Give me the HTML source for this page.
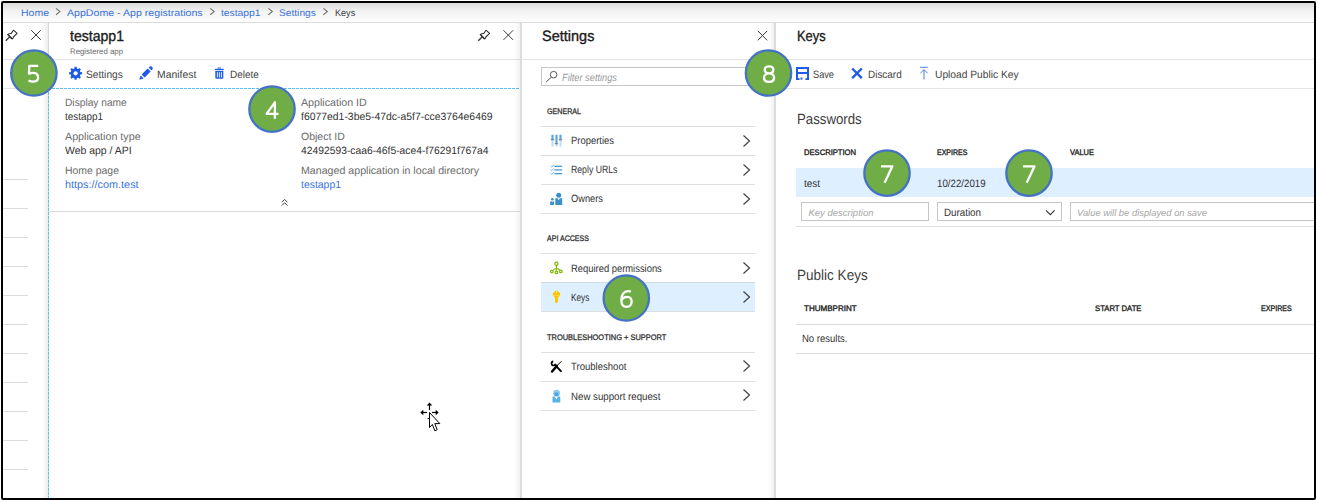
<!DOCTYPE html>
<html><head><meta charset="utf-8"><style>
html,body{margin:0;padding:0;width:1317px;height:501px;overflow:hidden;background:#fff}
body{position:relative;font-family:'Liberation Sans', sans-serif}
.t{position:absolute;white-space:nowrap;line-height:1;transform-origin:0 0;text-rendering:geometricPrecision}
.b{position:absolute}
.frame{position:absolute;left:1px;top:1px;width:1315px;height:499px;box-sizing:border-box;border:2px solid #000;border-radius:2px;pointer-events:none}
.ov{position:absolute;left:0;top:0}
</style></head><body>
<div class="b" style="left:3px;top:3px;width:1311px;height:19px;background:linear-gradient(#dadada,#f3f3f3 45%,#fdfdfd)"></div>
<div class="b" style="left:3px;top:22px;width:1311px;height:1px;background:#dcdcdc"></div>
<div class="b" style="left:42px;top:23px;width:6px;height:475px;background:linear-gradient(90deg,rgba(0,0,0,0),rgba(0,0,0,0.07))"></div>
<div class="b" style="left:48px;top:23px;width:1px;height:475px;background:#d6d6d6"></div>
<div class="b" style="left:3px;top:59px;width:45px;height:1px;background:#e3e3e3"></div>
<div class="b" style="left:3px;top:88px;width:45px;height:1px;background:#e3e3e3"></div>
<div class="b" style="left:3px;top:179px;width:25px;height:1px;background:#dcdcdc"></div>
<div class="b" style="left:3px;top:208px;width:25px;height:1px;background:#dcdcdc"></div>
<div class="b" style="left:3px;top:237px;width:25px;height:1px;background:#dcdcdc"></div>
<div class="b" style="left:3px;top:266px;width:25px;height:1px;background:#dcdcdc"></div>
<div class="b" style="left:3px;top:295px;width:25px;height:1px;background:#dcdcdc"></div>
<div class="b" style="left:3px;top:324px;width:25px;height:1px;background:#dcdcdc"></div>
<div class="b" style="left:3px;top:353px;width:25px;height:1px;background:#dcdcdc"></div>
<div class="b" style="left:3px;top:382px;width:25px;height:1px;background:#dcdcdc"></div>
<div class="b" style="left:3px;top:411px;width:25px;height:1px;background:#dcdcdc"></div>
<div class="b" style="left:3px;top:440px;width:25px;height:1px;background:#dcdcdc"></div>
<div class="b" style="left:3px;top:469px;width:25px;height:1px;background:#dcdcdc"></div>
<div class="b" style="left:49px;top:59px;width:471px;height:1px;background:#e3e3e3"></div>
<div class="b" style="left:48px;top:88px;width:472px;height:1px;background:repeating-linear-gradient(90deg,#5ec2f0 0 3px,transparent 3px 4px)"></div>
<div class="b" style="left:48px;top:88px;width:1px;height:410px;background:repeating-linear-gradient(180deg,#5ec2f0 0 3px,transparent 3px 4px)"></div>
<div class="b" style="left:49px;top:211px;width:471px;height:1px;background:#dcdcdc"></div>
<div class="b" style="left:514px;top:23px;width:6px;height:475px;background:linear-gradient(90deg,rgba(0,0,0,0),rgba(0,0,0,0.05))"></div>
<div class="b" style="left:520px;top:23px;width:2px;height:475px;background:#dcdcdc"></div>
<div class="b" style="left:768px;top:23px;width:6px;height:475px;background:linear-gradient(90deg,rgba(0,0,0,0),rgba(0,0,0,0.05))"></div>
<div class="b" style="left:774px;top:23px;width:2px;height:475px;background:#dcdcdc"></div>
<div class="b" style="left:521px;top:59px;width:253px;height:1px;background:#e3e3e3"></div>
<div class="b" style="left:541px;top:67px;width:214px;height:19px;border:1px solid #c6c6c6;box-sizing:border-box;background:#fff"></div>
<div class="b" style="left:541px;top:126px;width:214px;height:1px;background:#dedede"></div>
<div class="b" style="left:541px;top:155px;width:214px;height:1px;background:#dedede"></div>
<div class="b" style="left:541px;top:184px;width:214px;height:1px;background:#dedede"></div>
<div class="b" style="left:541px;top:213px;width:214px;height:1px;background:#dedede"></div>
<div class="b" style="left:541px;top:253px;width:214px;height:1px;background:#dedede"></div>
<div class="b" style="left:541px;top:311px;width:214px;height:1px;background:#dedede"></div>
<div class="b" style="left:541px;top:352px;width:214px;height:1px;background:#dedede"></div>
<div class="b" style="left:541px;top:381px;width:214px;height:1px;background:#dedede"></div>
<div class="b" style="left:541px;top:410px;width:214px;height:1px;background:#dedede"></div>
<div class="b" style="left:541px;top:283px;width:214px;height:28px;background:#deefff"></div>
<div class="b" style="left:541px;top:282px;width:214px;height:1px;background:#cfdde9"></div>
<div class="b" style="left:775px;top:59px;width:539px;height:1px;background:#e3e3e3"></div>
<div class="b" style="left:775px;top:88px;width:539px;height:1px;background:#e3e3e3"></div>
<div class="b" style="left:796px;top:168px;width:518px;height:29px;background:#deefff"></div>
<div class="b" style="left:801px;top:202px;width:128px;height:19px;border:1px solid #c6c6c6;box-sizing:border-box"></div>
<div class="b" style="left:937px;top:202px;width:125px;height:19px;border:1px solid #c6c6c6;box-sizing:border-box"></div>
<div class="b" style="left:1070px;top:202px;width:244px;height:19px;border:1px solid #c6c6c6;box-sizing:border-box;border-right:none"></div>
<div class="b" style="left:796px;top:226px;width:518px;height:1px;background:#dedede"></div>
<div class="b" style="left:796px;top:324px;width:518px;height:1px;background:#dedede"></div>
<div class="b" style="left:796px;top:353px;width:518px;height:1px;background:#dedede"></div>
<div class="t" style="left:20.5px;top:9px;font-size:9.6px;font-weight:400;font-style:normal;color:#3a73d9;transform:scaleX(1.0940);">Home</div>
<div class="t" style="left:67.0px;top:9px;font-size:9.6px;font-weight:400;font-style:normal;color:#3a73d9;transform:scaleX(1.1055);">AppDome - App registrations</div>
<div class="t" style="left:221.3px;top:9px;font-size:9.6px;font-weight:400;font-style:normal;color:#3a73d9;transform:scaleX(1.0730);">testapp1</div>
<div class="t" style="left:279.3px;top:9px;font-size:9.6px;font-weight:400;font-style:normal;color:#3a73d9;transform:scaleX(1.0614);">Settings</div>
<div class="t" style="left:334.8px;top:9px;font-size:9.6px;font-weight:400;font-style:normal;color:#404040;transform:scaleX(0.9464);">Keys</div>
<div class="t" style="left:69.5px;top:29px;font-size:15px;font-weight:400;font-style:normal;color:#1a1a1a;transform:scaleX(0.9384);-webkit-text-stroke:0.35px #1a1a1a">testapp1</div>
<div class="t" style="left:69.7px;top:48px;font-size:8px;font-weight:400;font-style:normal;color:#666;transform:scaleX(0.9767);">Registered app</div>
<div class="t" style="left:86.4px;top:70px;font-size:10.6px;font-weight:400;font-style:normal;color:#444444;transform:scaleX(0.9613);">Settings</div>
<div class="t" style="left:156.9px;top:70px;font-size:10.6px;font-weight:400;font-style:normal;color:#444444;transform:scaleX(0.9813);">Manifest</div>
<div class="t" style="left:230.0px;top:70px;font-size:10.6px;font-weight:400;font-style:normal;color:#444444;transform:scaleX(0.9404);">Delete</div>
<div class="t" style="left:65.4px;top:98px;font-size:10.6px;font-weight:400;font-style:normal;color:#6b6b6b;transform:scaleX(0.9628);">Display name</div>
<div class="t" style="left:65.4px;top:112px;font-size:10.6px;font-weight:400;font-style:normal;color:#333333;transform:scaleX(0.9347);">testapp1</div>
<div class="t" style="left:65.4px;top:132px;font-size:10.6px;font-weight:400;font-style:normal;color:#6b6b6b;transform:scaleX(1.0107);">Application type</div>
<div class="t" style="left:65.4px;top:146px;font-size:10.6px;font-weight:400;font-style:normal;color:#333333;transform:scaleX(0.9862);">Web app / API</div>
<div class="t" style="left:65.4px;top:166px;font-size:10.6px;font-weight:400;font-style:normal;color:#6b6b6b;transform:scaleX(0.9857);">Home page</div>
<div class="t" style="left:65.4px;top:180px;font-size:10.6px;font-weight:400;font-style:normal;color:#3a73d9;transform:scaleX(1.0244);">https://com.test</div>
<div class="t" style="left:300.8px;top:98px;font-size:10.6px;font-weight:400;font-style:normal;color:#6b6b6b;transform:scaleX(1.0065);">Application ID</div>
<div class="t" style="left:300.8px;top:112px;font-size:10.6px;font-weight:400;font-style:normal;color:#333333;transform:scaleX(0.9822);">f6077ed1-3be5-47dc-a5f7-cce3764e6469</div>
<div class="t" style="left:300.8px;top:132px;font-size:10.6px;font-weight:400;font-style:normal;color:#6b6b6b;transform:scaleX(0.9919);">Object ID</div>
<div class="t" style="left:300.8px;top:146px;font-size:10.6px;font-weight:400;font-style:normal;color:#333333;transform:scaleX(0.9734);">42492593-caa6-46f5-ace4-f76291f767a4</div>
<div class="t" style="left:300.8px;top:166px;font-size:10.6px;font-weight:400;font-style:normal;color:#6b6b6b;transform:scaleX(1.0041);">Managed application in local directory</div>
<div class="t" style="left:300.8px;top:180px;font-size:10.6px;font-weight:400;font-style:normal;color:#3a73d9;transform:scaleX(0.9839);">testapp1</div>
<div class="t" style="left:542.0px;top:29px;font-size:15px;font-weight:400;font-style:normal;color:#1a1a1a;transform:scaleX(0.9667);-webkit-text-stroke:0.35px #1a1a1a">Settings</div>
<div class="t" style="left:562.0px;top:74px;font-size:10.4px;font-weight:400;font-style:italic;color:#9a9a9a;transform:scaleX(0.8900);">Filter settings</div>
<div class="t" style="left:547.4px;top:108px;font-size:8px;font-weight:400;font-style:normal;color:#333;transform:scaleX(0.8893);-webkit-text-stroke:0.3px #333">GENERAL</div>
<div class="t" style="left:571.0px;top:136px;font-size:10.6px;font-weight:400;font-style:normal;color:#333333;transform:scaleX(0.8903);">Properties</div>
<div class="t" style="left:571.0px;top:165px;font-size:10.6px;font-weight:400;font-style:normal;color:#333333;transform:scaleX(0.8208);">Reply URLs</div>
<div class="t" style="left:571.0px;top:194px;font-size:10.6px;font-weight:400;font-style:normal;color:#333333;transform:scaleX(0.8767);">Owners</div>
<div class="t" style="left:547.4px;top:235px;font-size:8px;font-weight:400;font-style:normal;color:#333;transform:scaleX(0.8828);-webkit-text-stroke:0.3px #333">API ACCESS</div>
<div class="t" style="left:571.0px;top:264px;font-size:10.6px;font-weight:400;font-style:normal;color:#333333;transform:scaleX(0.8863);">Required permissions</div>
<div class="t" style="left:571.0px;top:293px;font-size:10.6px;font-weight:400;font-style:normal;color:#333333;transform:scaleX(0.7809);">Keys</div>
<div class="t" style="left:547.4px;top:334px;font-size:8px;font-weight:400;font-style:normal;color:#333;transform:scaleX(0.9320);-webkit-text-stroke:0.3px #333">TROUBLESHOOTING + SUPPORT</div>
<div class="t" style="left:571.0px;top:362px;font-size:10.6px;font-weight:400;font-style:normal;color:#333333;transform:scaleX(0.9015);">Troubleshoot</div>
<div class="t" style="left:571.0px;top:392px;font-size:10.6px;font-weight:400;font-style:normal;color:#333333;transform:scaleX(0.9146);">New support request</div>
<div class="t" style="left:796.8px;top:29px;font-size:15px;font-weight:400;font-style:normal;color:#1a1a1a;transform:scaleX(0.8618);-webkit-text-stroke:0.35px #1a1a1a">Keys</div>
<div class="t" style="left:812.9px;top:70px;font-size:10.6px;font-weight:400;font-style:normal;color:#444444;transform:scaleX(0.8693);">Save</div>
<div class="t" style="left:867.6px;top:70px;font-size:10.6px;font-weight:400;font-style:normal;color:#444444;transform:scaleX(0.9381);">Discard</div>
<div class="t" style="left:934.8px;top:70px;font-size:10.6px;font-weight:400;font-style:normal;color:#444444;transform:scaleX(0.9656);">Upload Public Key</div>
<div class="t" style="left:796.5px;top:113px;font-size:14.8px;font-weight:400;font-style:normal;color:#3d3d3d;transform:scaleX(0.8940);">Passwords</div>
<div class="t" style="left:803.8px;top:149px;font-size:8px;font-weight:400;font-style:normal;color:#222;transform:scaleX(0.9511);-webkit-text-stroke:0.35px #222">DESCRIPTION</div>
<div class="t" style="left:937.4px;top:149px;font-size:8px;font-weight:400;font-style:normal;color:#222;transform:scaleX(0.8764);-webkit-text-stroke:0.35px #222">EXPIRES</div>
<div class="t" style="left:1070.3px;top:149px;font-size:8px;font-weight:400;font-style:normal;color:#222;transform:scaleX(0.9360);-webkit-text-stroke:0.35px #222">VALUE</div>
<div class="t" style="left:803.8px;top:179px;font-size:10.6px;font-weight:400;font-style:normal;color:#333333;transform:scaleX(0.9369);">test</div>
<div class="t" style="left:937.4px;top:179px;font-size:10.6px;font-weight:400;font-style:normal;color:#333333;transform:scaleX(0.9164);">10/22/2019</div>
<div class="t" style="left:808.5px;top:209px;font-size:9.5px;font-weight:400;font-style:italic;color:#a6a6a6;">Key description</div>
<div class="t" style="left:944.0px;top:208px;font-size:10.6px;font-weight:400;font-style:normal;color:#333333;transform:scaleX(0.9239);">Duration</div>
<div class="t" style="left:1077.0px;top:209px;font-size:9.5px;font-weight:400;font-style:italic;color:#a6a6a6;transform:scaleX(0.9872);">Value will be displayed on save</div>
<div class="t" style="left:796.5px;top:269px;font-size:14.8px;font-weight:400;font-style:normal;color:#3d3d3d;transform:scaleX(0.9145);">Public Keys</div>
<div class="t" style="left:804.1px;top:305px;font-size:8px;font-weight:400;font-style:normal;color:#222;transform:scaleX(1.0047);-webkit-text-stroke:0.35px #222">THUMBPRINT</div>
<div class="t" style="left:1095.2px;top:305px;font-size:8px;font-weight:400;font-style:normal;color:#222;transform:scaleX(0.9625);-webkit-text-stroke:0.35px #222">START DATE</div>
<div class="t" style="left:1261.0px;top:305px;font-size:8px;font-weight:400;font-style:normal;color:#222;transform:scaleX(0.8850);-webkit-text-stroke:0.35px #222">EXPIRES</div>
<div class="t" style="left:801.5px;top:334px;font-size:10.6px;font-weight:400;font-style:normal;color:#333333;transform:scaleX(0.8985);">No results.</div>
<svg class="ov" width="1317" height="501" viewBox="0 0 1317 501"><g transform="translate(0,0)" fill="none" stroke="#333" stroke-linejoin="round"><path d="M5.8 40.7 L9.9 36.7" stroke-width="1.2"/><path d="M7.7 34.4 Q9.6 33.4 11.1 33.6 L13.5 30.2 L17.1 33.4 L13.3 37 Q13.4 38.2 12.1 39 Z" stroke-width="1.05"/><path d="M7.9 34.6 L11.9 38.8" stroke-width="1.5"/></g>
<path d="M31.2 30.2 L40.8 39.8 M40.8 30.2 L31.2 39.8" stroke="#3a3a3a" stroke-width="1" fill="none"/>
<g transform="translate(472.5,0)" fill="none" stroke="#333" stroke-linejoin="round"><path d="M5.8 40.7 L9.9 36.7" stroke-width="1.2"/><path d="M7.7 34.4 Q9.6 33.4 11.1 33.6 L13.5 30.2 L17.1 33.4 L13.3 37 Q13.4 38.2 12.1 39 Z" stroke-width="1.05"/><path d="M7.9 34.6 L11.9 38.8" stroke-width="1.5"/></g>
<path d="M503.5 30.3 L513.1 39.9 M513.1 30.3 L503.5 39.9" stroke="#3a3a3a" stroke-width="1" fill="none"/>
<path d="M757.8 30.900000000000002 L767.2 40.300000000000004 M767.2 30.900000000000002 L757.8 40.300000000000004" stroke="#3a3a3a" stroke-width="1" fill="none"/>
<polygon points="74.30,68.78 74.57,66.78 76.63,66.78 76.90,68.78 77.88,69.19 79.48,67.96 80.94,69.42 79.71,71.02 80.12,72.00 82.12,72.27 82.12,74.33 80.12,74.60 79.71,75.58 80.94,77.18 79.48,78.64 77.88,77.41 76.90,77.82 76.63,79.82 74.57,79.82 74.30,77.82 73.32,77.41 71.72,78.64 70.26,77.18 71.49,75.58 71.08,74.60 69.08,74.33 69.08,72.27 71.08,72.00 71.49,71.02 70.26,69.42 71.72,67.96 73.32,69.19" fill="#1e5be6"/>
<circle cx="75.6" cy="73.3" r="4.9" fill="#1e5be6"/>
<circle cx="75.6" cy="73.3" r="2.1" fill="#fff"/>
<g fill="#1e5be6"><path d="M139.3 79.8 L140.6 75.4 L143.6 78.4 Z"/><path d="M141.6 74.4 L147.6 68.4 L150.6 71.4 L144.6 77.4 Z"/><path d="M148.6 67.4 L149.8 66.6 Q151.3 65.9 152.3 67.1 Q153.2 68.3 152.4 69.4 L151.6 70.4 Z"/></g>
<g fill="#1e5be6"><rect x="214.8" y="68.8" width="9" height="1.4"/><rect x="217.6" y="67.2" width="3.4" height="1.6" opacity="0.6"/><path d="M215.3 71 H223.3 V77.6 Q223.3 78.8 222.1 78.8 H216.5 Q215.3 78.8 215.3 77.6 Z"/></g>
<g fill="#fff"><rect x="216.9" y="72.2" width="0.9" height="5.2"/><rect x="218.9" y="72.2" width="0.9" height="5.2"/><rect x="220.9" y="72.2" width="0.9" height="5.2"/></g>
<g stroke="#555" stroke-width="1" fill="none"><circle cx="553.6" cy="74.7" r="3.3"/><path d="M551.3 77.2 L546.3 81.8"/></g>
<path d="M743.5 135.5 L749.5 141 L743.5 146.5" stroke="#444" stroke-width="1.2" fill="none"/>
<path d="M743.5 164.5 L749.5 170 L743.5 175.5" stroke="#444" stroke-width="1.2" fill="none"/>
<path d="M743.5 193.5 L749.5 199 L743.5 204.5" stroke="#444" stroke-width="1.2" fill="none"/>
<path d="M743.5 262.5 L749.5 268 L743.5 273.5" stroke="#444" stroke-width="1.2" fill="none"/>
<path d="M743.5 291.5 L749.5 297 L743.5 302.5" stroke="#444" stroke-width="1.2" fill="none"/>
<path d="M743.5 360.5 L749.5 366 L743.5 371.5" stroke="#444" stroke-width="1.2" fill="none"/>
<path d="M743.5 389.5 L749.5 395 L743.5 400.5" stroke="#444" stroke-width="1.2" fill="none"/>
<g><rect x="551.5" y="134.8" width="2" height="11.8" fill="#bcdcf3"/><rect x="555.5" y="134.8" width="2" height="11.8" fill="#bcdcf3"/><rect x="559.5" y="134.8" width="2" height="11.8" fill="#bcdcf3"/><rect x="551.5" y="134.8" width="2" height="5" fill="#5aa8dd"/><rect x="555.5" y="134.8" width="2" height="9" fill="#5aa8dd"/><rect x="559.5" y="134.8" width="2" height="5" fill="#5aa8dd"/><rect x="550.8" y="139" width="3.4" height="1.3" fill="#8a8a8a"/><rect x="554.8" y="143" width="3.4" height="1.3" fill="#8a8a8a"/><rect x="558.8" y="139" width="3.4" height="1.3" fill="#8a8a8a"/></g>
<path d="M550.6 166.0 L551.8 167.10000000000002 L553.8 164.8" stroke="#5aa3d6" stroke-width="0.8" fill="none"/><rect x="554.4" y="165.70000000000002" width="7.8" height="1.3" fill="#4b9bd3"/>
<path d="M550.6 169.6 L551.8 170.70000000000002 L553.8 168.4" stroke="#5aa3d6" stroke-width="0.8" fill="none"/><rect x="554.4" y="169.3" width="7.8" height="1.3" fill="#4b9bd3"/>
<path d="M550.6 173.29999999999998 L551.8 174.4 L553.8 172.1" stroke="#5aa3d6" stroke-width="0.8" fill="none"/><rect x="554.4" y="173.0" width="7.8" height="1.3" fill="#4b9bd3"/>
<g fill="#3a8fcc"><circle cx="558.7" cy="195.3" r="2.5"/><path d="M555.3 198.3 L557.6 198.3 L558.7 200.3 L559.8 198.3 L562.2 198.3 L562.2 205 L555.3 205 Z"/><circle cx="552.3" cy="199.3" r="1.3"/><path d="M550.2 201.3 L551.6 201.3 L552.2 202.2 L552.9 201.3 L553.9 201.3 L553.9 205 L550.2 205 Z"/></g>
<g stroke="#7fba00" stroke-width="1.2" fill="none"><circle cx="556.4" cy="263.8" r="1.6"/><path d="M556.4 265.4 V270.5"/><path d="M552.6 270.8 Q554 268.5 556.4 268.5 Q558.8 268.5 560 270.6"/><circle cx="551.8" cy="271.6" r="1.3"/><circle cx="556.4" cy="272.4" r="1.3"/><circle cx="560.9" cy="271.4" r="1.3"/></g>
<g fill="#fbc500"><path d="M556.5 290.6 Q557.6 290.6 560.3 293.6 Q560.6 295.4 558.4 297.4 L558 297.4 V301.8 L556.5 303.4 L555 301.8 V297.4 L554.6 297.4 Q552.4 295.4 552.7 293.6 Q555.4 290.6 556.5 290.6 Z"/></g>
<path d="M556.5 291.6 V293" stroke="#fff" stroke-width="0.9"/><path d="M554.2 295.2 H558.8" stroke="#ffe066" stroke-width="0.8"/>
<g stroke="#000" fill="none" stroke-linecap="round"><path d="M555.67 363.76 A2.1 2.1 0 1 1 553.24 361.33" stroke-width="1.7" stroke-linecap="butt"/><path d="M555.4 365.4 L560.9 371.1" stroke-width="2"/><path d="M561.4 361.3 L557.4 365.3" stroke-width="1" stroke-linecap="butt"/><path d="M556.9 365.9 L552.1 371.5" stroke-width="2.5"/></g>
<g fill="#5ab3e3"><circle cx="556.6" cy="393.2" r="3.4" fill="#8ccbee"/><circle cx="556.4" cy="394.2" r="2" fill="#4aa6dc"/><path d="M552.5 396.4 L554.6 396.4 L556.4 399.2 L558.2 396.4 L560.3 396.4 L560.3 402.6 L552.5 402.6 Z"/></g>
<g stroke="#444" stroke-width="1" fill="none"><path d="M281.8 202.3 L284.6 199.4 L287.4 202.3"/><path d="M281.8 205.6 L284.6 202.7 L287.4 205.6"/></g>
<g fill="none" stroke="#1e5be6" stroke-width="2"><path d="M797 80 V68 H808 V80"/><path d="M797 73 H808"/></g><rect x="796" y="78.2" width="3.6" height="1.8" fill="#1e5be6"/><rect x="805.4" y="78.2" width="3.6" height="1.8" fill="#1e5be6"/><rect x="800.5" y="77.6" width="2" height="2" fill="#1e5be6"/>
<path d="M852.2 68.5 L861.8 78.1 M861.8 68.5 L852.2 78.1" stroke="#1e5be6" stroke-width="2.4" fill="none"/>
<g stroke="#4a7ee6" stroke-width="1" fill="none"><path d="M920.1 67.3 H927.8"/><path d="M924 69.8 V79.5"/><path d="M920.4 73.2 L924 69.6 L927.6 73.2"/></g>
<path d="M1046 210.3 L1050.3 214.6 L1054.6 210.3" stroke="#333" stroke-width="1.1" fill="none"/>
<circle cx="33.9" cy="73" r="22.7" fill="#70ad47" stroke="#4472c4" stroke-width="2.3"/>
<path transform="translate(27.90,64.80)" d="M10.3 1 H1.4 L1.1 8.9 C2.4 8.3 3.6 8 5 8 C8.4 8 10.2 10.1 10.2 12.6 C10.2 15.3 8.1 16.8 5 16.8 C3.3 16.8 1.9 16.4 0.6 15.7" fill="none" stroke="#fff" stroke-width="2.3" stroke-linejoin="round"/>
<circle cx="272" cy="109.1" r="22.7" fill="#70ad47" stroke="#4472c4" stroke-width="2.3"/>
<path transform="translate(265.70,101.20)" d="M0.8 12.7 L9.2 1.1 V17.5 M0 12.7 H12.8" fill="none" stroke="#fff" stroke-width="2.3" stroke-linejoin="round"/>
<circle cx="768.5" cy="73" r="22.7" fill="#70ad47" stroke="#4472c4" stroke-width="2.3"/>
<path transform="translate(762.95,65.30)" d="M6.1 8.1 C3.4 8.1 1.8 6.6 1.8 4.5 C1.8 2.4 3.5 1.1 6.1 1.1 C8.7 1.1 10.4 2.4 10.4 4.5 C10.4 6.6 8.8 8.1 6.1 8.1 C3 8.1 1.1 10 1.1 12.4 C1.1 15 3.2 16.6 6.1 16.6 C9 16.6 11.1 15 11.1 12.4 C11.1 10 9.2 8.1 6.1 8.1 Z" fill="none" stroke="#fff" stroke-width="2.3" stroke-linejoin="round"/>
<circle cx="887" cy="173.1" r="22.7" fill="#70ad47" stroke="#4472c4" stroke-width="2.3"/>
<path transform="translate(881.00,165.20)" d="M0 1.1 H11.4 L3.6 17.6" fill="none" stroke="#fff" stroke-width="2.3" stroke-linejoin="round"/>
<circle cx="1029" cy="173.1" r="22.7" fill="#70ad47" stroke="#4472c4" stroke-width="2.3"/>
<path transform="translate(1023.10,165.20)" d="M0 1.1 H11.4 L3.6 17.6" fill="none" stroke="#fff" stroke-width="2.3" stroke-linejoin="round"/>
<circle cx="626.3" cy="298" r="22.7" fill="#70ad47" stroke="#4472c4" stroke-width="2.3"/>
<path transform="translate(620.25,290.10)" d="M10.6 1.5 C9.8 1.1 8.9 1 7.9 1 C3.6 1 1.1 4.6 1.1 9.9 C1.1 14.4 2.9 16.8 6.2 16.8 C9.4 16.8 11.4 14.6 11.4 11.6 C11.4 8.5 9.6 6.7 6.7 6.7 C4.3 6.7 2.3 7.9 1.2 10.1" fill="none" stroke="#fff" stroke-width="2.3" stroke-linejoin="round"/>
<path d="M56 8.4 L59.9 11.6 L56 14.7" stroke="#707070" stroke-width="1.1" fill="none"/>
<path d="M210.2 8.4 L214.1 11.6 L210.2 14.7" stroke="#707070" stroke-width="1.1" fill="none"/>
<path d="M268.4 8.4 L272.29999999999995 11.6 L268.4 14.7" stroke="#707070" stroke-width="1.1" fill="none"/>
<path d="M323.4 8.4 L327.29999999999995 11.6 L323.4 14.7" stroke="#707070" stroke-width="1.1" fill="none"/>
<g stroke="#000" stroke-width="1.2" fill="none"><path d="M429.5 404.5 V410"/><path d="M422 412.5 H427"/><path d="M432 412.5 H437"/><path d="M427.5 418.5 H429"/></g><g fill="#000"><path d="M429.5 402.6 L432.3 405.6 H426.7 Z"/><path d="M420.3 412.5 L423.3 409.7 V415.3 Z"/><path d="M438.7 412.5 L435.7 409.7 V415.3 Z"/></g><path d="M429.5 412.5 V427.5 L432.4 424.4 L434.8 430.8 L437.2 429.8 L434.8 423.6 L439.8 423.6 Z" fill="#fff" stroke="#000" stroke-width="1"/></svg>
<div class="frame"></div>
</body></html>
